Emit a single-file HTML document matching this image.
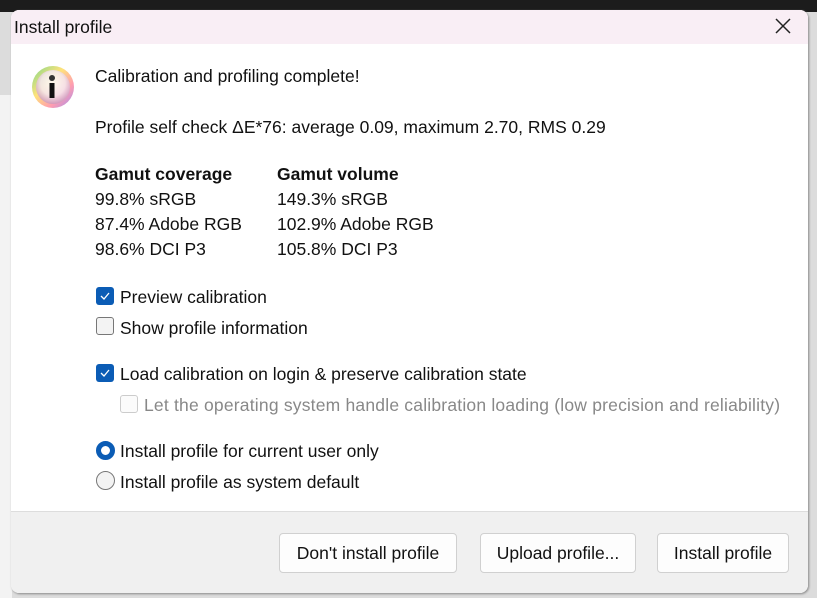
<!DOCTYPE html>
<html><head><meta charset="utf-8"><style>
body{margin:0;width:817px;height:598px;overflow:hidden;background:#dcdcdc;font-family:"Liberation Sans",sans-serif;position:relative}
.top{position:absolute;left:0;top:0;width:817px;height:12px;background:#1c1c1c}
.lstrip{position:absolute;left:0;top:95px;width:12px;height:503px;background:#f3f3f3}
.dlg{position:absolute;left:11px;top:10px;width:797px;height:583px;background:#fff;border-radius:8px;overflow:hidden;box-shadow:1px 1px 2px #888}
.tb{height:34px;background:#f9eef5;font-size:17.5px;color:#111;line-height:34px;padding-left:3px}
.x{position:absolute;right:17px;top:8px;width:16px;height:16px}
.t{position:absolute;font-size:17.5px;color:#111;white-space:nowrap;line-height:20px}
.b{font-weight:bold}
.cb{position:absolute;width:18px;height:18px;border-radius:3px;box-sizing:border-box}
.on{background:#0b5cb5}
.off{border:1px solid #777;background:#f3f3f3}
.dis{border:1px solid #ccc;background:#fbfbfb}
.rad{position:absolute;width:19px;height:19px;border-radius:50%;box-sizing:border-box}
.foot{position:absolute;left:0;top:501px;width:797px;height:82px;background:#f0f0f0;border-top:1px solid #ddd}
.btn{position:absolute;top:21px;height:40px;box-sizing:border-box;border:1px solid #d0d0d0;border-radius:4px;background:#fdfdfd;font-size:17.5px;color:#111;text-align:center;line-height:38px;white-space:nowrap}
</style></head><body>
<div class="top"></div><div class="lstrip"></div>
<div class="dlg">
<div class="tb">Install profile</div>
<svg class="x" viewBox="0 0 16 16"><path d="M1 1L15 15M15 1L1 15" stroke="#222" stroke-width="1.5"/></svg>
<svg style="position:absolute;left:19px;top:54px" width="46" height="46" viewBox="0 0 46 46"><defs><radialGradient id="g" cx="50%" cy="40%" r="60%"><stop offset="0" stop-color="#fff"/><stop offset="0.6" stop-color="#f4e8f0"/><stop offset="1" stop-color="#c9b"/></radialGradient><linearGradient id="h" x1="0" y1="0" x2="1" y2="1"><stop offset="0" stop-color="#7fd88a"/><stop offset="0.4" stop-color="#ffe27a"/><stop offset="0.7" stop-color="#ff9db0"/><stop offset="1" stop-color="#9f8cf0"/></linearGradient></defs><circle cx="23" cy="23" r="21" fill="url(#h)"/><circle cx="23" cy="23" r="17" fill="url(#g)" opacity="0.85"/><circle cx="22" cy="14" r="3" fill="#333"/><rect x="19.5" y="19" width="5" height="15" fill="#111"/></svg>
<div class="t" style="left:84px;top:56px">Calibration and profiling complete!</div>
<div class="t" style="left:84px;top:107px">Profile self check ΔE*76: average 0.09, maximum 2.70, RMS 0.29</div>
<div class="t b" style="left:84px;top:154px">Gamut coverage</div>
<div class="t b" style="left:266px;top:154px">Gamut volume</div>
<div class="t" style="left:84px;top:179px">99.8% sRGB</div>
<div class="t" style="left:266px;top:179px">149.3% sRGB</div>
<div class="t" style="left:84px;top:204px">87.4% Adobe RGB</div>
<div class="t" style="left:266px;top:204px">102.9% Adobe RGB</div>
<div class="t" style="left:84px;top:229px">98.6% DCI P3</div>
<div class="t" style="left:266px;top:229px">105.8% DCI P3</div>
<div class="cb on" style="left:85px;top:277px"><svg width="18" height="18"><path d="M5 9l3 3 5-6" stroke="#fff" fill="none" stroke-width="1.3"/></svg></div>
<div class="t" style="left:109px;top:277px">Preview calibration</div>
<div class="cb off" style="left:85px;top:307px"></div>
<div class="t" style="left:109px;top:308px">Show profile information</div>
<div class="cb on" style="left:85px;top:354px"><svg width="18" height="18"><path d="M5 9l3 3 5-6" stroke="#fff" fill="none" stroke-width="1.3"/></svg></div>
<div class="t" style="left:109px;top:354px">Load calibration on login &amp; preserve calibration state</div>
<div class="cb dis" style="left:109px;top:385px"></div>
<div class="t" style="left:133px;top:385px;color:#888;letter-spacing:0.2px">Let the operating system handle calibration loading (low precision and reliability)</div>
<div class="rad" style="left:85px;top:431px;border:5px solid #0b5cb5;background:#fff"></div>
<div class="t" style="left:109px;top:431px">Install profile for current user only</div>
<div class="rad" style="left:85px;top:461px;border:1px solid #777;background:#f3f3f3"></div>
<div class="t" style="left:109px;top:462px">Install profile as system default</div>
<div class="foot">
<div class="btn" style="left:268px;width:178px">Don't install profile</div>
<div class="btn" style="left:469px;width:156px">Upload profile...</div>
<div class="btn" style="left:646px;width:132px">Install profile</div>
</div>
</div>
</body></html>
